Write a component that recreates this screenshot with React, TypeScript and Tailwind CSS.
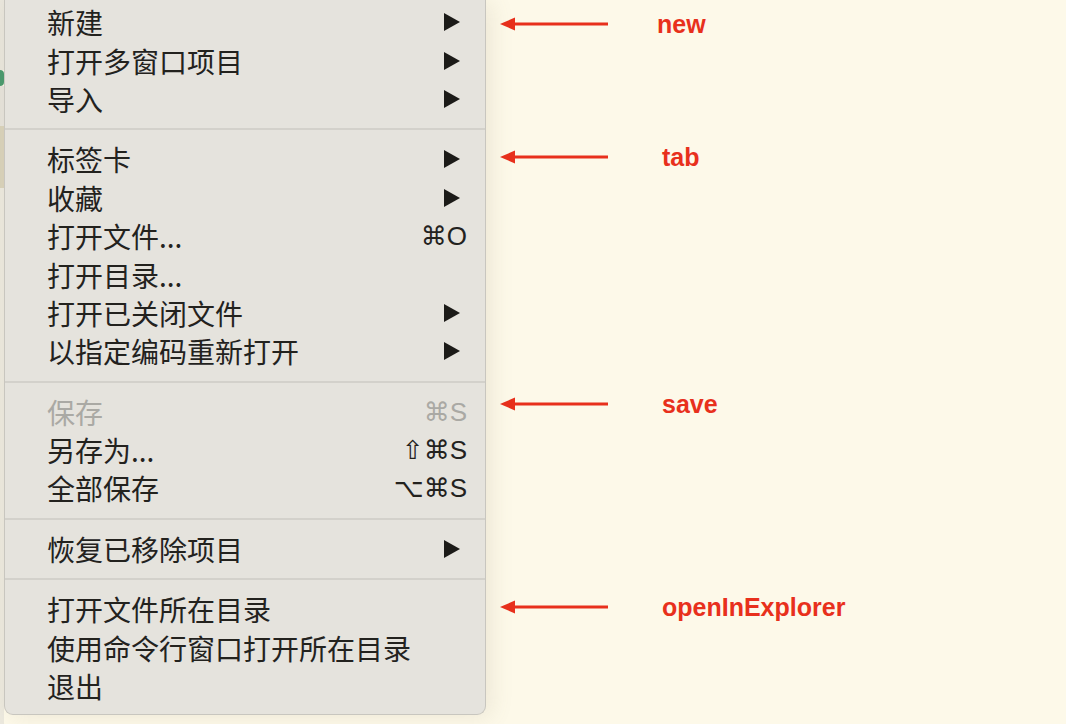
import React from 'react'

type Item = {
  label: string
  sub?: boolean
  shortcut?: string
  disabled?: boolean
}

const groups: Item[][] = [
  [
    { label: '新建', sub: true },
    { label: '打开多窗口项目', sub: true },
    { label: '导入', sub: true },
  ],
  [
    { label: '标签卡', sub: true },
    { label: '收藏', sub: true },
    { label: '打开文件...', shortcut: '⌘O' },
    { label: '打开目录...' },
    { label: '打开已关闭文件', sub: true },
    { label: '以指定编码重新打开', sub: true },
  ],
  [
    { label: '保存', shortcut: '⌘S', disabled: true },
    { label: '另存为...', shortcut: '⇧⌘S' },
    { label: '全部保存', shortcut: '⌥⌘S' },
  ],
  [{ label: '恢复已移除项目', sub: true }],
  [
    { label: '打开文件所在目录' },
    { label: '使用命令行窗口打开所在目录' },
    { label: '退出' },
  ],
]

const notes = [
  { text: 'new', top: 'mt-[9px]', left: 'ml-[47px]' },
  { text: 'tab', top: 'mt-[103px]', left: 'ml-[52px]' },
  { text: 'save', top: 'mt-[217px]', left: 'ml-[52px]' },
  { text: 'openInExplorer', top: 'mt-[173px]', left: 'ml-[52px]' },
]

function Triangle() {
  return (
    <svg width="18" height="20" viewBox="0 0 18 20" className="block">
      <polygon points="1,1 17,10 1,19" fill="#1c1b18" />
    </svg>
  )
}

function Arrow() {
  return (
    <svg width="110" height="16" viewBox="0 0 110 16" className="block shrink-0">
      <polygon points="0,8 15,1.5 15,14.5" fill="#e8301c" />
      <line x1="12" y1="8" x2="108" y2="8" stroke="#e8301c" strokeWidth="2.8" />
    </svg>
  )
}

function MenuRow({ item }: { item: Item }) {
  return (
    <div
      className={`flex items-center justify-between h-[38.4px] pl-[42px] pr-[18px] text-[28px] leading-none ${
        item.disabled ? 'text-[#aaa9a4]' : 'text-[#23221e]'
      }`}
      style={{ fontFamily: '"Noto Sans CJK SC", "Noto Sans", sans-serif' }}
    >
      <span>{item.label}</span>
      {item.sub && (
        <span className="mr-[6px]">
          <Triangle />
        </span>
      )}
      {item.shortcut && (
        <span
          className="text-[26px]"
          style={{ fontFamily: '"Liberation Sans", "DejaVu Sans", sans-serif' }}
        >
          {item.shortcut}
        </span>
      )}
    </div>
  )
}

export default function App() {
  return (
    <div className="w-[1066px] h-[724px] overflow-hidden bg-[#fdf9e9] flex">
      {/* window behind the menu */}
      <div className="w-[4px] flex flex-col shrink-0">
        <div className="h-[70px] bg-[#e9e6dc]" />
        <div className="h-[16px] bg-[#4a9a6e] rounded-r-full" />
        <div className="h-[40px] bg-[#e6e3da]" />
        <div className="h-[62px] bg-[#d9d2ba]" />
        <div className="flex-1 bg-[#ece9de]" />
      </div>

      <div className="w-[482px] h-[715px] shrink-0 bg-[#e5e3dd] border-x border-b border-[#c8c6bf] rounded-b-[9px] pt-[3px] shadow-[6px_2px_22px_rgba(120,110,80,0.12)] relative z-10">
        {groups.map((g, gi) => (
          <div key={gi}>
            {gi > 0 && <div className="my-[10px] h-[2px] bg-[#d3d1cb]" />}
            {g.map((item) => (
              <MenuRow key={item.label} item={item} />
            ))}
          </div>
        ))}
      </div>

      <div className="flex flex-col pl-[14px]">
        {notes.map((n) => (
          <div key={n.text} className={`flex items-center h-[30px] ${n.top}`}>
            <Arrow />
            <span
              className={`${n.left} text-[25px] font-bold text-[#e8301c] leading-none`}
              style={{ fontFamily: '"Liberation Sans", Arial, sans-serif' }}
            >
              {n.text}
            </span>
          </div>
        ))}
      </div>
    </div>
  )
}
